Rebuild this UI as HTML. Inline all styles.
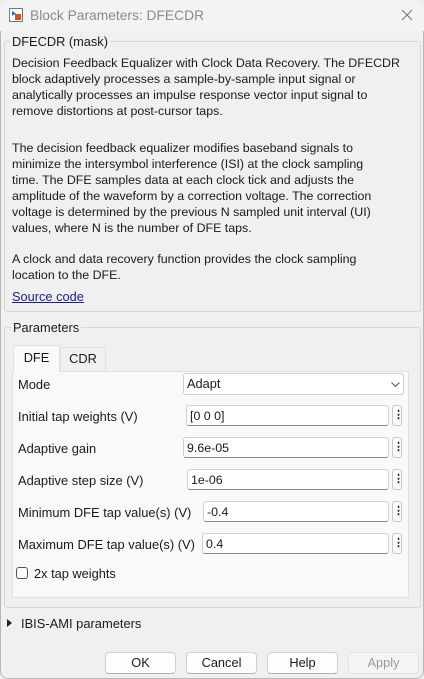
<!DOCTYPE html>
<html><head><style>
body{margin:0;width:424px;height:679px;background:#f0f0f0;font-family:"Liberation Sans",sans-serif;font-size:12.4px;color:#1a1a1a;position:relative;overflow:hidden}
.a{position:absolute;white-space:nowrap}
.win{position:absolute;left:0;top:0;width:422px;height:677px;border:1px solid #b8b8b8;border-radius:8px;background:#f0f0f0}
.title{position:absolute;left:0;top:0;width:424px;height:31px;background:#f3f3f3;border-radius:8px 8px 0 0}
.grp{position:absolute;border:1px solid #d8d8d8;border-radius:3px}
.lg{position:absolute;background:#f0f0f0;padding:0 2px}
.p{position:absolute;left:12px;line-height:16px;white-space:nowrap}
.f{position:absolute;height:21px;background:#fff;border:1px solid #d0d0d0;border-bottom:1px solid #8a8a8a;border-radius:3px;box-sizing:border-box;padding-left:3px;line-height:20px}
.k{position:absolute;left:392px;width:10px;height:21px;border:1px solid #c8c8c8;border-radius:3px;box-sizing:border-box;background:#fbfbfb;text-align:center;font-weight:bold;line-height:19px;font-size:11px}
.l{position:absolute;left:18px;font-size:12.9px}
.b{position:absolute;top:652px;width:71px;height:22px;border:1px solid #d0d0d0;border-bottom-color:#b0b0b0;border-radius:4px;background:#fdfdfd;box-sizing:border-box;text-align:center;line-height:20px;font-size:12.8px}
</style></head><body>
<div class="win"></div>
<div class="title"></div>
<svg class="a" style="left:9px;top:8px" width="14" height="14"><rect x=".5" y=".5" width="13" height="13" fill="#fff" stroke="#777"/><path d="M3 3l4 2.5-4 2.5z" fill="#1f6fd0"/><rect x="6" y="6" width="6" height="6" fill="#d9531e"/></svg>
<div class="a" style="left:30px;top:8px;font-size:13.8px;color:#8a8a8a">Block Parameters: DFECDR</div>
<svg class="a" style="left:401px;top:9px" width="12" height="12"><path d="M1 1l10 10M11 1L1 11" stroke="#777" stroke-width="1.1"/></svg>

<div class="grp" style="left:4px;top:41px;width:415px;height:269px"></div>
<div class="lg" style="left:10px;top:34px;font-size:12.8px">DFECDR (mask)</div>
<div class="p" style="top:55px">Decision Feedback Equalizer with Clock Data Recovery. The DFECDR<br>block adaptively processes a sample-by-sample input signal or<br>analytically processes an impulse response vector input signal to<br>remove distortions at post-cursor taps.</div>
<div class="p" style="top:140px">The decision feedback equalizer modifies baseband signals to<br>minimize the intersymbol interference (ISI) at the clock sampling<br>time. The DFE samples data at each clock tick and adjusts the<br>amplitude of the waveform by a correction voltage. The correction<br>voltage is determined by the previous N sampled unit interval (UI)<br>values, where N is the number of DFE taps.</div>
<div class="p" style="top:251px">A clock and data recovery function provides the clock sampling<br>location to the DFE.</div>
<div class="p" style="top:289px;color:#1a1a9a;text-decoration:underline;font-size:12.8px">Source code</div>

<div class="grp" style="left:4px;top:327px;width:415px;height:279px"></div>
<div class="lg" style="left:11px;top:320px;font-size:12.8px">Parameters</div>
<div class="a" style="left:12px;top:371px;width:397px;height:227px;background:#f9f9f9;border:1px solid #e0e0e0;box-sizing:border-box"></div>
<div class="a" style="left:13px;top:345px;width:47px;height:27px;background:#f9f9f9;border:1px solid #e0e0e0;border-bottom:none;box-sizing:border-box;text-align:center;line-height:24px;font-size:12.8px">DFE</div>
<div class="a" style="left:60px;top:347px;width:46px;height:24px;background:#f0f0f0;border:1px solid #e0e0e0;border-bottom:none;box-sizing:border-box;text-align:center;line-height:22px;font-size:12.8px">CDR</div>

<div class="l" style="top:377px">Mode</div>
<div class="f" style="left:183px;top:373px;width:221px;height:22px;border-bottom-color:#d0d0d0;font-size:12.8px">Adapt</div>
<svg class="a" style="left:391px;top:382px" width="9" height="6"><path d="M.5.5l4 4 4-4" fill="none" stroke="#555"/></svg>

<div class="l" style="top:409px">Initial tap weights (V)</div>
<div class="f" style="left:186px;top:405px;width:203px">[0 0 0]</div><div class="k" style="top:405px">⋮</div>
<div class="l" style="top:441px">Adaptive gain</div>
<div class="f" style="left:183px;top:437px;width:206px">9.6e-05</div><div class="k" style="top:437px">⋮</div>
<div class="l" style="top:473px">Adaptive step size (V)</div>
<div class="f" style="left:187px;top:469px;width:202px">1e-06</div><div class="k" style="top:469px">⋮</div>
<div class="l" style="top:505px">Minimum DFE tap value(s) (V)</div>
<div class="f" style="left:203px;top:501px;width:186px">-0.4</div><div class="k" style="top:501px">⋮</div>
<div class="l" style="top:537px">Maximum DFE tap value(s) (V)</div>
<div class="f" style="left:202px;top:533px;width:187px">0.4</div><div class="k" style="top:533px">⋮</div>

<div class="a" style="left:16px;top:567px;width:12px;height:12px;border:1px solid #555;border-radius:3px;box-sizing:border-box;background:#fff"></div>
<div class="a" style="left:34px;top:566px;font-size:12.8px">2x tap weights</div>

<svg class="a" style="left:7px;top:619px" width="6" height="8"><path d="M0 0l5 4-5 4z" fill="#222"/></svg>
<div class="a" style="left:21px;top:616px;font-size:12.9px">IBIS-AMI parameters</div>

<div class="b" style="left:105px">OK</div>
<div class="b" style="left:186px">Cancel</div>
<div class="b" style="left:267px">Help</div>
<div class="b" style="left:348px;color:#9a9a9a;background:#f5f5f5;border-color:#e2e2e2">Apply</div>
</body></html>
